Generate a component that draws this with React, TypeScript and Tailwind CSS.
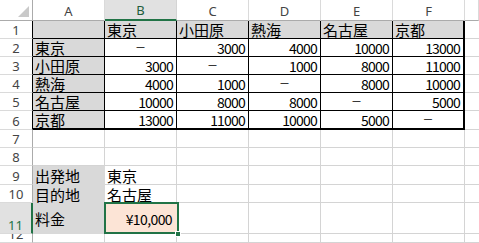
const jp = "font-['Noto_Sans_CJK_JP',sans-serif]";

const cities = ["東京", "小田原", "熱海", "名古屋", "京都"];
const fares = [
  ["－", "3000", "4000", "10000", "13000"],
  ["3000", "－", "1000", "8000", "11000"],
  ["4000", "1000", "－", "8000", "10000"],
  ["10000", "8000", "8000", "－", "5000"],
  ["13000", "11000", "10000", "5000", "－"],
];
const letters = ["A", "B", "C", "D", "E", "F", ""];

const RowHead = ({ n, active, dark }: { n: number | string; active?: boolean; dark?: boolean }) => (
  <div
    className={`flex items-end justify-center pb-[1px] text-[13px] leading-none font-['Noto_Sans',sans-serif] border-b border-b-[#dadada] overflow-hidden ${
      active
        ? "bg-[#e1e1e1] text-[#217346] border-r-2 border-r-[#217346]"
        : dark
        ? "bg-white text-[#444] border-r border-r-black"
        : "bg-white text-[#444] border-r border-r-[#ababab]"
    }`}
  >
    {n}
  </div>
);

const Blank = ({ last }: { last?: boolean }) => (
  <div className={`bg-white border-b border-b-[#d4d4d4] ${last ? "" : "border-r border-r-[#d4d4d4]"}`} />
);

const App = () => {
  return (
    <div
      className={`w-[479px] h-[243px] overflow-hidden bg-white grid grid-cols-[33px_72px_72px_72px_72px_72px_72px_1fr] grid-rows-[21px_18px_18px_18px_18px_18px_19px_18px_18px_19px_18px_31px_1fr] text-[15px] text-black ${jp}`}
    >
      {/* column headers */}
      <div className="relative bg-white border-r border-r-[#ababab] border-b border-b-[#ababab]">
        <svg className="absolute right-[3px] bottom-[3px]" width="11" height="11" viewBox="0 0 11 11">
          <polygon points="11,0 11,11 0,11" fill="#c9c9c9" />
        </svg>
      </div>
      {letters.map((l, i) => (
        <div
          key={i}
          className={`flex items-end justify-center pb-[2px] text-[13px] leading-none font-['Noto_Sans',sans-serif] ${
            l === "B"
              ? "bg-[#e1e1e1] text-[#215c3a] border-b-2 border-b-[#217346] border-r border-r-[#d4d4d4]"
              : "bg-white text-[#444] border-b border-b-[#ababab] border-r border-r-[#dadada]"
          }`}
        >
          {l}
        </div>
      ))}

      {/* row 1 */}
      <RowHead n={1} dark />
      <div className="bg-[#d9d9d9] border-r border-r-black border-b border-b-black" />
      {cities.map((c, i) => (
        <div
          key={c}
          className={`bg-[#d9d9d9] flex items-center pl-[2px] leading-none border-b border-b-black ${
            i === 4 ? "border-r-2 border-r-black" : "border-r border-r-black"
          }`}
        >
          {c}
        </div>
      ))}
      <Blank last />

      {/* rows 2-6 */}
      {cities.map((c, r) => (
        <div key={c} className="contents">
          <RowHead n={r + 2} dark />
          <div
            className={`bg-[#d9d9d9] flex items-center pl-[2px] leading-none border-r border-r-black ${
              r === 4 ? "border-b-2 border-b-black" : "border-b border-b-black"
            }`}
          >
            {c}
          </div>
          {fares[r].map((v, i) => (
            <div
              key={i}
              className={`bg-white flex items-center leading-none ${
                v === "－" ? "justify-center text-[11px]" : "justify-end pr-[3px] text-[14px] tracking-[-0.8px]"
              } ${i === 4 ? "border-r-2 border-r-black" : "border-r border-r-black"} ${
                r === 4 ? "border-b-2 border-b-black" : "border-b border-b-black"
              }`}
            >
              {v}
            </div>
          ))}
          <Blank last />
        </div>
      ))}

      {/* rows 7-8 */}
      {[7, 8].map((n) => (
        <div key={n} className="contents">
          <RowHead n={n} />
          {letters.map((_, i) => (
            <Blank key={i} last={i === 6} />
          ))}
        </div>
      ))}

      {/* row 9 */}
      <RowHead n={9} />
      <div className="bg-[#d9d9d9] flex items-center pl-[2px] leading-none">出発地</div>
      <div className="bg-white flex items-center pl-[2px] leading-none border-r border-r-[#d4d4d4] border-b border-b-[#d4d4d4]">
        東京
      </div>
      {[0, 1, 2, 3, 4].map((i) => (
        <Blank key={i} last={i === 4} />
      ))}

      {/* row 10 */}
      <RowHead n={10} />
      <div className="bg-[#d9d9d9] flex items-center pl-[2px] leading-none">目的地</div>
      <div className="bg-white flex items-center pl-[2px] leading-none border-r border-r-[#d4d4d4]">
        名古屋
      </div>
      {[0, 1, 2, 3, 4].map((i) => (
        <Blank key={i} last={i === 4} />
      ))}

      {/* row 11 */}
      <RowHead n={11} active />
      <div className="bg-[#d9d9d9] flex items-center pl-[2px] leading-none">料金</div>
      <div className="relative bg-[#fce4d6] flex items-center justify-end pr-[5px] leading-none text-[14px] tracking-[-0.6px]">
        ¥10,000
        <div className="absolute -left-[1px] -top-[1px] -right-[2px] bottom-0 border-2 border-[#217346]" />
        <div className="absolute -right-[4px] -bottom-[3px] w-[6px] h-[6px] bg-[#217346] border border-white" />
      </div>
      {[0, 1, 2, 3, 4].map((i) => (
        <Blank key={i} last={i === 4} />
      ))}

      {/* row 12 */}
      <RowHead n={12} />
      {letters.map((_, i) => (
        <Blank key={i} last={i === 6} />
      ))}
    </div>
  );
};

export default App;
